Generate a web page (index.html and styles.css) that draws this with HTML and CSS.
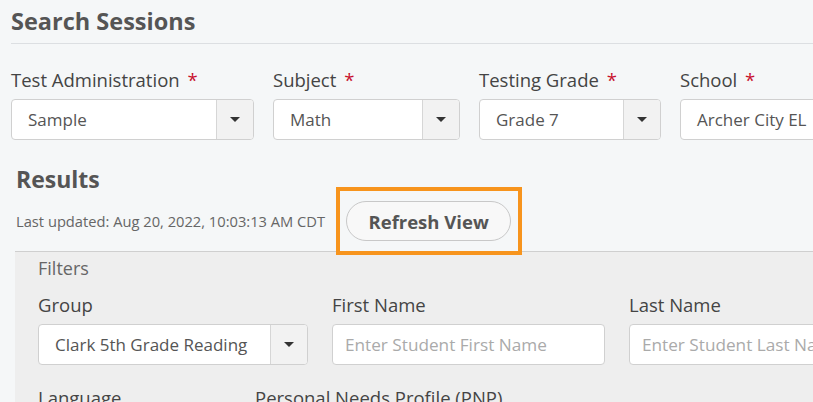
FILE: index.html
```html
<!DOCTYPE html>
<html>
<head>
<meta charset="utf-8">
<link rel="stylesheet" href="styles.css">
</head>
<body>
<div class="page">
  <h1 class="title">Search Sessions</h1>
  <div class="criteria">
    <div class="field f-admin">
      <label class="lbl">Test Administration <span class="req">*</span></label>
      <div class="select"><span class="val">Sample</span><span class="btn"><span class="caret"></span></span></div>
    </div>
    <div class="field f-subject">
      <label class="lbl">Subject <span class="req">*</span></label>
      <div class="select"><span class="val">Math</span><span class="btn"><span class="caret"></span></span></div>
    </div>
    <div class="field f-grade">
      <label class="lbl">Testing Grade <span class="req">*</span></label>
      <div class="select"><span class="val">Grade 7</span><span class="btn"><span class="caret"></span></span></div>
    </div>
    <div class="field f-school">
      <label class="lbl">School <span class="req">*</span></label>
      <div class="select"><span class="val">Archer City EL</span></div>
    </div>
  </div>

  <section class="results">
    <h2 class="rtitle">Results</h2>
    <div class="updated">
      <span class="stamp">Last updated: Aug 20, 2022, 10:03:13 AM CDT</span>
      <span class="refresh-wrap">
        <button class="refresh">Refresh View</button>
        <span class="highlight"></span>
      </span>
    </div>
    <div class="panel">
      <div class="ftitle">Filters</div>
      <div class="frow">
        <div class="field g-group">
          <label class="lbl">Group</label>
          <div class="select"><span class="val">Clark 5th Grade Reading</span><span class="btn"><span class="caret"></span></span></div>
        </div>
        <div class="field g-first">
          <label class="lbl">First Name</label>
          <div class="input">Enter Student First Name</div>
        </div>
        <div class="field g-last">
          <label class="lbl">Last Name</label>
          <div class="input">Enter Student Last Name</div>
        </div>
      </div>
      <div class="frow2">
        <div class="lbl l-lang">Language</div>
        <div class="lbl l-pnp">Personal Needs Profile (PNP)</div>
      </div>
    </div>
  </section>
</div>
</body>
</html>
```

FILE: styles.css
```css
html, body {
  margin: 0;
  padding: 0;
  background: #f5f7f8;
  font-family: "Open Sans", "Noto Sans", sans-serif;
  color: #444;
  overflow: hidden;
}
.page {
  width: 813px;
  height: 402px;
  overflow: hidden;
}
.title {
  margin: 0 0 0 11px;
  padding-top: 4px;
  font-size: 23.5px;
  font-weight: 700;
  line-height: 34px;
  color: #555;
  height: 39px;
  border-bottom: 1px solid #dcdfe2;
}
.criteria {
  display: flex;
  gap: 19px;
  padding: 24px 0 0 11px;
  white-space: nowrap;
}
.field {
  display: flex;
  flex-direction: column;
  flex: none;
}
.lbl {
  font-size: 18.5px;
  line-height: 24px;
  color: #444;
  margin-bottom: 7px;
  white-space: nowrap;
}
.req {
  color: #c8102e;
  margin-left: 3px;
}
.f-admin { width: 243px; }
.f-subject { width: 187px; }
.f-grade { width: 182px; }
.f-school { width: 200px; }
.select {
  display: flex;
  height: 41px;
  box-sizing: border-box;
  border: 1px solid #d0d0d0;
  border-radius: 4px;
  background: #fff;
  overflow: hidden;
}
.val {
  flex: 1;
  font-size: 17px;
  line-height: 39px;
  padding-left: 16px;
  color: #555;
  white-space: nowrap;
  overflow: hidden;
}
.btn {
  flex: none;
  width: 36px;
  border-left: 1px solid #d6d6d6;
  background: #f2f2f2;
  display: flex;
  align-items: center;
  justify-content: center;
}
.caret {
  width: 0;
  height: 0;
  border-left: 5px solid transparent;
  border-right: 5px solid transparent;
  border-top: 5px solid #333;
}
.results {
  padding: 24px 0 0 0;
}
.rtitle {
  margin: 0 0 0 16px;
  font-size: 23px;
  font-weight: 700;
  line-height: 30px;
  color: #555;
}
.updated {
  display: flex;
  align-items: center;
  padding: 7px 0 0 16px;
  height: 40px;
}
.stamp {
  font-size: 14.7px;
  color: #666;
  white-space: nowrap;
}
.refresh-wrap {
  position: relative;
  margin-left: 21px;
  display: inline-block;
}
.refresh {
  display: block;
  width: 165px;
  height: 40px;
  border: 1px solid #c8c8c8;
  border-radius: 20px;
  background: #f8f8f8;
  font-family: "Open Sans", "Noto Sans", sans-serif;
  font-size: 18.5px;
  font-weight: 700;
  color: #555;
  padding: 0;
}
.highlight {
  position: absolute;
  left: -10px;
  top: -14px;
  width: 186px;
  height: 68px;
  box-sizing: border-box;
  border: 4px solid #f7941d;
  z-index: 2;
}
.panel {
  margin: 10px 0 0 15px;
  border-top: 1px solid #cfcfcf;
  background: #eeeeee;
  padding: 4px 0 0 23px;
  height: 200px;
}
.ftitle {
  font-size: 18px;
  line-height: 24px;
  color: #666;
}
.frow {
  display: flex;
  gap: 24px;
  padding-top: 13px;
  white-space: nowrap;
}
.g-group { width: 270px; }
.g-first { width: 273px; }
.g-last { width: 250px; }
.frow .lbl { margin-bottom: 7px; }
.input {
  height: 41px;
  box-sizing: border-box;
  border: 1px solid #d0d0d0;
  border-radius: 4px;
  background: #fff;
  font-size: 17.2px;
  line-height: 39px;
  padding-left: 12px;
  color: #aaa;
  white-space: nowrap;
  overflow: hidden;
}
.frow2 {
  display: flex;
  padding-top: 21px;
}
.l-lang { width: 217px; }
```
